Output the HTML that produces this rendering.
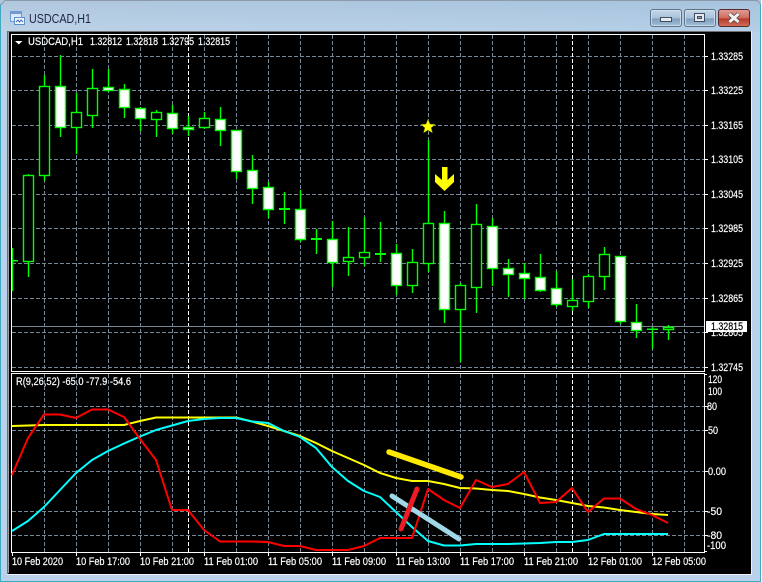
<!DOCTYPE html>
<html><head><meta charset="utf-8"><title>USDCAD,H1</title>
<style>
html,body{margin:0;padding:0;width:762px;height:582px;overflow:hidden;background:#fff}
svg{display:block}
text{font-family:"Liberation Sans",sans-serif;font-size:11px;fill:#fff;stroke:#fff;stroke-width:.2px}
</style></head><body>
<svg width="762" height="582" viewBox="0 0 762 582" xmlns="http://www.w3.org/2000/svg">
<defs>
<linearGradient id="tb" x1="0" y1="0" x2="1" y2="0"><stop offset="0" stop-color="#bccfe2"/><stop offset=".5" stop-color="#b4cde5"/><stop offset="1" stop-color="#aac7e2"/></linearGradient>
<linearGradient id="tv" x1="0" y1="0" x2="0" y2="1"><stop offset="0" stop-color="#a4bfd8"/><stop offset="1" stop-color="#bdd5ec"/></linearGradient>
<linearGradient id="b1" x1="0" y1="0" x2="0" y2="1"><stop offset="0" stop-color="#c6d8ea"/><stop offset=".5" stop-color="#a9c2da"/><stop offset=".55" stop-color="#7f9fbf"/><stop offset="1" stop-color="#a3c0d8"/></linearGradient>
<linearGradient id="b2" x1="0" y1="0" x2="0" y2="1"><stop offset="0" stop-color="#e0a098"/><stop offset=".5" stop-color="#cf6a5e"/><stop offset=".55" stop-color="#b83a2c"/><stop offset="1" stop-color="#d0705c"/></linearGradient>
</defs>
<!-- window frame -->
<rect x="0" y="0" width="762" height="582" fill="#b9d1ea"/>
<rect x="0" y="0" width="762" height="32" fill="url(#tv)"/>
<rect x="0" y="0" width="762" height="32" fill="url(#tb)" opacity=".5"/>
<path d="M0 581.5H762M.5 4V582M760.5 4V582" stroke="#3fa9c0" stroke-width="1" fill="none"/>
<path d="M761.5 0V582" stroke="#fff"/>
<path d="M.5 5L5 .5H757L760.5 4" stroke="#8a9aaa" fill="none"/>
<!-- title icon -->
<rect x="10.5" y="11.5" width="11" height="10" fill="#dce9f7" stroke="#6f9bd0"/>
<rect x="11" y="12" width="10" height="2" fill="#6f9bd0"/>
<rect x="14.5" y="17.5" width="10" height="7" fill="#eef5fc" stroke="#5f8fc8"/>
<path d="M16 22l2-2 1.5 2 1.5-2 2 2" stroke="#3f6fb0" fill="none"/>
<text x="29" y="23" style="font-size:13px;fill:#1f2348;stroke:none" textLength="62" lengthAdjust="spacingAndGlyphs">USDCAD,H1</text>
<!-- caption buttons -->
<rect x="650.5" y="9.5" width="31" height="17" rx="2.5" fill="url(#b1)" stroke="#5d7285"/>
<rect x="651.5" y="10.5" width="29" height="15" rx="2" fill="none" stroke="#dbe7f2" stroke-opacity=".7"/>
<rect x="660.5" y="17.5" width="11" height="4" fill="#e6eaee" stroke="#3f4f60"/>
<rect x="684.5" y="9.5" width="31" height="17" rx="2.5" fill="url(#b1)" stroke="#5d7285"/>
<rect x="685.5" y="10.5" width="29" height="15" rx="2" fill="none" stroke="#dbe7f2" stroke-opacity=".7"/>
<rect x="694.5" y="13.5" width="10" height="8" fill="#e6eaee" stroke="#3f4f60"/>
<rect x="697.5" y="16.5" width="4" height="2" fill="#8ea4b8" stroke="#3f4f60"/>
<rect x="718.5" y="9.5" width="31" height="17" rx="2.5" fill="url(#b2)" stroke="#5a2a2a"/>
<path d="M729.5 14l9 8M738.5 14l-9 8" stroke="#3f3f3f" stroke-width="4.4"/>
<path d="M729.5 14l9 8M738.5 14l-9 8" stroke="#f2f2f2" stroke-width="3"/>
<!-- client -->
<rect x="7" y="31" width="745" height="543" fill="#000"/>
<path d="M7.5 31V574M7 31.5H752" stroke="#6f6f6f"/>
<path d="M8.5 32V573" stroke="#a0a0a0"/>
<path d="M7 574.5H752M751.5 31V575" stroke="#f0f0f0"/>
<!-- pane frames -->
<g shape-rendering="crispEdges">
<path d="M11.5 34.5H704.5V371.5H11.5ZM11.5 373.5H704.5V552.5H11.5Z" fill="none" stroke="#fff"/>
<!-- grid -->
<g stroke="#778899" stroke-dasharray="4 2" fill="none">
<path d="M12 56.5H704M12 90.5H704M12 125.5H704M12 159.5H704M12 194.5H704M12 228.5H704M12 263.5H704M12 298.5H704M12 332.5H704M12 367.5H704"/>
<path d="M12 406.5H704M12 430.5H704M12 471.5H704M12 511.5H704M12 535.5H704"/>
<path d="M44.5 35V371M76.5 35V371M108.5 35V371M140.5 35V371M172.5 35V371M204.5 35V371M236.5 35V371M268.5 35V371M300.5 35V371M332.5 35V371M364.5 35V371M396.5 35V371M428.5 35V371M460.5 35V371M492.5 35V371M524.5 35V371M556.5 35V371M588.5 35V371M620.5 35V371M652.5 35V371M684.5 35V371"/>
<path d="M44.5 374V552M76.5 374V552M108.5 374V552M140.5 374V552M172.5 374V552M204.5 374V552M236.5 374V552M268.5 374V552M300.5 374V552M332.5 374V552M364.5 374V552M396.5 374V552M428.5 374V552M460.5 374V552M492.5 374V552M524.5 374V552M556.5 374V552M588.5 374V552M620.5 374V552M652.5 374V552M684.5 374V552"/>
</g>
<path d="M188.5 35V371M572.5 35V371M188.5 374V552M572.5 374V552" stroke="#fff" stroke-dasharray="4 2" fill="none"/>
<!-- ticks -->
<path d="M705 56.5h3M705 90.5h3M705 125.5h3M705 159.5h3M705 194.5h3M705 228.5h3M705 263.5h3M705 298.5h3M705 332.5h3M705 367.5h3M705 406.5h3M705 430.5h3M705 471.5h3M705 511.5h3M705 535.5h3M705 374.5h2M705 551.5h2M12.5 553v3M76.5 553v3M140.5 553v3M204.5 553v3M268.5 553v3M332.5 553v3M396.5 553v3M460.5 553v3M524.5 553v3M588.5 553v3M652.5 553v3" stroke="#fff" fill="none"/>
<!-- bid line -->
<path d="M12 326.5H704" stroke="#778899"/>
</g>
<!-- candles -->
<g>
<!-- wicks -->
<path stroke="#0f0" stroke-width="1.4" fill="none" d="M12.5 248V291M28.5 174V277M44.5 75V181M60.5 55V137M76.5 93V154M92.5 69V128M108.5 69V92M124.5 84V118M140.5 107V131M156.5 110V137M172.5 105V134M188.5 116V136M204.5 112V129M220.5 107V146M236.5 130V179M252.5 155V204M268.5 182V218M284.5 192V224M300.5 190V242M316.5 229V254M332.5 221V287M348.5 227V276M364.5 217V266M380.5 222V262M396.5 244V295M412.5 249V293M428.5 140V272M444.5 211V323M460.5 283V362M476.5 204V313M492.5 218V286M508.5 259V297M524.5 263V299M540.5 254V292M556.5 271V307M572.5 279V311M588.5 274V308M604.5 247V290M620.5 256V324M636.5 304V338M652.5 327V349M668.5 325V340"/>
<!-- dojis -->
<path fill="#0f0" d="M12 260h6v1.5h-6zM279 208h11v2h-11zM311 238h11v2h-11zM375 253h11v2h-11zM647 328.5h11v1.5h-11z"/>
<!-- black bodies -->
<g fill="#000" stroke="#0f0" stroke-width="1.4">
<rect x="23.5" y="175.5" width="10" height="86"/>
<rect x="39.5" y="86.5" width="10" height="89"/>
<rect x="71.5" y="112.5" width="10" height="15"/>
<rect x="87.5" y="88.5" width="10" height="27"/>
<rect x="151.5" y="112.5" width="10" height="7"/>
<rect x="199.5" y="118.5" width="10" height="9"/>
<rect x="343.5" y="257.5" width="10" height="4"/>
<rect x="359.5" y="252.5" width="10" height="5"/>
<rect x="407.5" y="262.5" width="10" height="23"/>
<rect x="423.5" y="223.5" width="10" height="40"/>
<rect x="455.5" y="285.5" width="10" height="24"/>
<rect x="471.5" y="224.5" width="10" height="63"/>
<rect x="567.5" y="300.5" width="10" height="6"/>
<rect x="583.5" y="276.5" width="10" height="25"/>
<rect x="599.5" y="254.5" width="10" height="22"/>
<rect x="663.5" y="327.5" width="10" height="2"/>
</g>
<!-- white bodies -->
<g fill="#fff" stroke="#0f0" stroke-width="1.4">
<rect x="55.5" y="86.5" width="10" height="41"/>
<rect x="103.5" y="87.5" width="10" height="3"/>
<rect x="119.5" y="89.5" width="10" height="18"/>
<rect x="135.5" y="108.5" width="10" height="10"/>
<rect x="167.5" y="113.5" width="10" height="15"/>
<rect x="183.5" y="127.5" width="10" height="2"/>
<rect x="215.5" y="119.5" width="10" height="11"/>
<rect x="231.5" y="130.5" width="10" height="41"/>
<rect x="247.5" y="170.5" width="10" height="18"/>
<rect x="263.5" y="187.5" width="10" height="22"/>
<rect x="295.5" y="209.5" width="10" height="30"/>
<rect x="327.5" y="239.5" width="10" height="23"/>
<rect x="391.5" y="253.5" width="10" height="32"/>
<rect x="439.5" y="223.5" width="10" height="86"/>
<rect x="487.5" y="226.5" width="10" height="42"/>
<rect x="503.5" y="268.5" width="10" height="6"/>
<rect x="519.5" y="273.5" width="10" height="5"/>
<rect x="535.5" y="277.5" width="10" height="13"/>
<rect x="551.5" y="288.5" width="10" height="16"/>
<rect x="615.5" y="256.5" width="10" height="65"/>
<rect x="631.5" y="322.5" width="10" height="8"/>
</g>
</g>
<!-- objects -->
<polygon points="428,119 430,124 435.5,124.4 431.2,127.8 432.6,133 428,130.2 423.4,133 424.8,127.8 420.500,124.4 426,124" fill="#ffff00" stroke="#5a5a00" stroke-width=".5"/>
<polygon points="442,167 447.5,167 447.5,180 454,174 454,182 444.5,191 435,182 435,174 442,180" fill="#ffff00"/>
<!-- price labels -->
<g>
<text x="711" y="60" textLength="32" lengthAdjust="spacingAndGlyphs">1.33285</text>
<text x="711" y="94" textLength="32" lengthAdjust="spacingAndGlyphs">1.33225</text>
<text x="711" y="129" textLength="32" lengthAdjust="spacingAndGlyphs">1.33165</text>
<text x="711" y="163" textLength="32" lengthAdjust="spacingAndGlyphs">1.33105</text>
<text x="711" y="198" textLength="32" lengthAdjust="spacingAndGlyphs">1.33045</text>
<text x="711" y="232" textLength="32" lengthAdjust="spacingAndGlyphs">1.32985</text>
<text x="711" y="267" textLength="32" lengthAdjust="spacingAndGlyphs">1.32925</text>
<text x="711" y="302" textLength="32" lengthAdjust="spacingAndGlyphs">1.32865</text>
<text x="711" y="336" textLength="32" lengthAdjust="spacingAndGlyphs">1.32805</text>
<text x="711" y="371" textLength="32" lengthAdjust="spacingAndGlyphs">1.32745</text>
</g>
<rect x="706" y="321" width="41" height="11" fill="#fff" shape-rendering="crispEdges"/>
<text x="711" y="330" style="fill:#000;stroke:#000" textLength="32" lengthAdjust="spacingAndGlyphs">1.32815</text>
<!-- header text -->
<polygon points="15,41 22.5,41 18.75,44.5" fill="#fff"/>
<text x="28" y="45" textLength="55" lengthAdjust="spacingAndGlyphs">USDCAD,H1</text>
<text x="90" y="45" textLength="32" lengthAdjust="spacingAndGlyphs">1.32812</text>
<text x="126" y="45" textLength="32" lengthAdjust="spacingAndGlyphs">1.32818</text>
<text x="162" y="45" textLength="32" lengthAdjust="spacingAndGlyphs">1.32795</text>
<text x="198" y="45" textLength="32" lengthAdjust="spacingAndGlyphs">1.32815</text>
<text x="16" y="385" textLength="115" lengthAdjust="spacingAndGlyphs">R(9,26,52) -65.0 -77.9 -54.6</text>
<!-- indicator scale -->
<text x="708" y="383" textLength="14" lengthAdjust="spacingAndGlyphs">120</text>
<text x="708" y="395" textLength="14" lengthAdjust="spacingAndGlyphs">100</text>
<text x="707" y="410" textLength="10" lengthAdjust="spacingAndGlyphs">80</text>
<text x="708" y="434" textLength="10" lengthAdjust="spacingAndGlyphs">50</text>
<text x="708" y="475" textLength="18" lengthAdjust="spacingAndGlyphs">0.00</text>
<text x="707" y="515" textLength="15" lengthAdjust="spacingAndGlyphs">-50</text>
<text x="707" y="539" textLength="15" lengthAdjust="spacingAndGlyphs">-80</text>
<text x="707" y="549" textLength="19" lengthAdjust="spacingAndGlyphs">-100</text>
<!-- indicator lines -->
<g fill="none" stroke-width="2" stroke-linejoin="round">
<polyline stroke="#ffff00" points="12,426 44,425 124,425 140,421 156,417.5 236,417.5 252,421.5 268,426 284,431 300,436 316,443 332,451 348,458 364,465 380,473 396,478 412,481 428,481 444,484 460,488 476,488.5 492,490 508,491 524,494 540,497.5 556,500 572,503 588,506 604,507.5 620,510 636,512 652,514 668,515"/>
<polyline stroke="#00ffff" points="12,531 28,521 44,507 60,490 76,473 92,460 108,451 124,443.5 140,436.5 156,430 172,425.5 188,421 204,419 220,418 236,418 252,421.5 268,423 284,431 300,437 316,448 332,467 348,481 364,491 380,497 396,512 412,527 428,541 444,545.5 460,545.5 476,544 508,544 524,543.5 540,543 556,542 572,542 588,540 604,534 620,534 668,534"/>
<polyline stroke="#ff0000" points="12,475 28,438 44,414.5 60,414.5 76,418 92,409.5 108,409.5 124,417 140,439 156,460 172,510 188,510 204,530 220,541.5 252,541.5 268,542 284,546 300,546 316,550 348,550 364,546 380,538 412,538 428,489 444,500 460,508 476,480 492,487 508,484 524,472 540,503 556,502 572,488 588,512 604,498.5 620,498.5 636,509 652,515 668,523"/>
</g>
<!-- trend lines -->
<g stroke-linecap="round" fill="none">
<line x1="389" y1="452" x2="461" y2="477" stroke="#ffea00" stroke-width="5.5"/>
<line x1="392" y1="496" x2="459" y2="539" stroke="#a0d8e8" stroke-width="5"/>
<line x1="417" y1="489" x2="401" y2="529" stroke="#ed1c24" stroke-width="5"/>
</g>
<!-- time labels -->
<g>
<text x="12" y="565" textLength="51" lengthAdjust="spacingAndGlyphs">10 Feb 2020</text>
<text x="76" y="565" textLength="54" lengthAdjust="spacingAndGlyphs">10 Feb 17:00</text>
<text x="140" y="565" textLength="54" lengthAdjust="spacingAndGlyphs">10 Feb 21:00</text>
<text x="204" y="565" textLength="54" lengthAdjust="spacingAndGlyphs">11 Feb 01:00</text>
<text x="268" y="565" textLength="54" lengthAdjust="spacingAndGlyphs">11 Feb 05:00</text>
<text x="332" y="565" textLength="54" lengthAdjust="spacingAndGlyphs">11 Feb 09:00</text>
<text x="396" y="565" textLength="54" lengthAdjust="spacingAndGlyphs">11 Feb 13:00</text>
<text x="460" y="565" textLength="54" lengthAdjust="spacingAndGlyphs">11 Feb 17:00</text>
<text x="524" y="565" textLength="54" lengthAdjust="spacingAndGlyphs">11 Feb 21:00</text>
<text x="588" y="565" textLength="54" lengthAdjust="spacingAndGlyphs">12 Feb 01:00</text>
<text x="652" y="565" textLength="54" lengthAdjust="spacingAndGlyphs">12 Feb 05:00</text>
</g>
</svg>
</body></html>
